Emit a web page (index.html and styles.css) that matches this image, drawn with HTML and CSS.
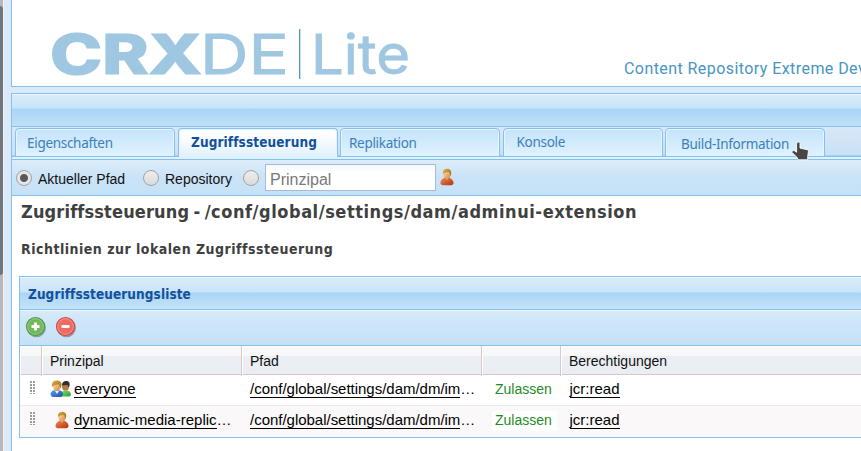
FILE: index.html
```html
<!DOCTYPE html>
<html lang="de">
<head>
<meta charset="utf-8">
<title>CRXDE Lite</title>
<link rel="stylesheet" href="styles.css">
</head>
<body>
<svg width="0" height="0" class="defs" aria-hidden="true">
  <defs>
    <linearGradient id="hair" x1="0" y1="0" x2="1" y2="1"><stop offset="0" stop-color="#e0b245"/><stop offset="1" stop-color="#96641b"/></linearGradient>
    <linearGradient id="skin" x1="0" y1="0" x2="1" y2="1"><stop offset="0" stop-color="#ffe2ae"/><stop offset="1" stop-color="#d98a3d"/></linearGradient>
    <linearGradient id="red" x1="0" y1="0" x2="1" y2="1"><stop offset="0" stop-color="#f58a50"/><stop offset="1" stop-color="#ae3210"/></linearGradient>
    <linearGradient id="blue" x1="0" y1="0" x2="1" y2="1"><stop offset="0" stop-color="#5d9ef0"/><stop offset="1" stop-color="#1d4fa6"/></linearGradient>
    <linearGradient id="green" x1="0" y1="0" x2="1" y2="1"><stop offset="0" stop-color="#82e072"/><stop offset="1" stop-color="#259b31"/></linearGradient>
    <symbol id="user" viewBox="0 0 14 18">
      <path d="M.5 14.800C.6 12.200 2.400 10.900 5 9.500h4c2.600 1.400 4.400 2.600 4.500 5.100.1 1.600-.6 2.300-2 2.600H2.500C1.100 16.900.4 16.200.5 14.800Z" fill="url(#red)"/>
      <path d="M4.600 8.500 7 12.300l2.500-3.800Z" fill="#e9aa62"/>
      <ellipse cx="7" cy="6" rx="3.500" ry="4.500" fill="url(#skin)"/>
      <path d="M3.100 6.500C2.500 3 3.700.8 7 .7c3.500 0 4.800 2.400 4 5.800l-.8 1.700c.1-2.500-.5-3.600-2-4.200-1.700.7-3.400.4-4.300 1Z" fill="url(#hair)"/>
    </symbol>
  </defs>
</svg>
<div class="app">
  <div class="rail"><div class="thumb"></div></div>
  <div class="main">
    <header class="banner">
      <svg class="logo" width="365" height="84" viewBox="48 2 365 84" role="img">
        <text class="logo-bold" x="50" y="74" textLength="152" lengthAdjust="spacingAndGlyphs">CRX</text>
        <text class="logo-thin" x="200" y="74" textLength="89" lengthAdjust="spacingAndGlyphs">DE</text>
        <rect x="299" y="29" width="1.300" height="50" fill="#4a93c4"/>
        <text class="logo-thin" x="311" y="74" textLength="99" lengthAdjust="spacingAndGlyphs">Lite</text>
      </svg>
      <span class="tagline">Content Repository Extreme Development Environment</span>
    </header>
    <section class="panel">
      <div class="bar"></div>
      <nav class="tabs">
        <a class="tab t1">Eigenschaften</a>
        <a class="tab active t2">Zugriffssteuerung</a>
        <a class="tab t3">Replikation</a>
        <a class="tab t4">Konsole</a>
        <a class="tab t5">Build-Information
          <svg class="cursor" width="22" height="22" viewBox="0 0 22 22"><path d="M7.600 2.200c1.300-.6 2.400.1 2.400 1.500v4.400l7.200 1.600c1 .3 1.300.9 1.200 1.900l-.7 5.400v2.800H8.200l-1.300-2.500-5.100-5.100c.3-1.800 1.700-2.100 2.900-1.300l1.900 1.400V4.200c0-.9.300-1.500 1-2Z" fill="#464646" stroke="#fff" stroke-width=".9"/></svg>
        </a>
      </nav>
      <div class="filters">
        <i class="radio on"></i><span class="r1">Aktueller Pfad</span>
        <i class="radio"></i><span class="r2">Repository</span>
        <i class="radio"></i><span class="field">Prinzipal</span>
        <svg class="pick" width="14" height="18"><use href="#user"/></svg>
      </div>
      <main class="content">
        <h1>Zugriffssteuerung - <span>/conf/global/settings/dam/adminui-extension</span></h1>
        <h2>Richtlinien zur lokalen Zugriffssteuerung</h2>
        <div class="list">
          <div class="list-title"><span>Zugriffssteuerungsliste</span></div>
          <div class="tools">
            <svg width="22" height="22" viewBox="0 0 22 22"><circle cx="11.500" cy="11.700" r="9.500" fill="#617868" opacity=".6"/><circle cx="10.500" cy="10.500" r="9.600" fill="#4b9b43"/><circle cx="10.500" cy="10.500" r="7.900" fill="#72b85e" stroke="#a9d79b" stroke-width=".8"/><path d="M10.500 6.500v8M6.500 10.500h8" stroke="#fff" stroke-width="2.800"/></svg>
            <svg width="22" height="22" viewBox="0 0 22 22"><circle cx="11.500" cy="11.700" r="9.500" fill="#786166" opacity=".6"/><circle cx="10.500" cy="10.500" r="9.600" fill="#d44745"/><circle cx="10.500" cy="10.500" r="7.900" fill="#ee6b61" stroke="#f7aaa2" stroke-width=".8"/><path d="M6.500 10.500h8" stroke="#fff" stroke-width="2.800"/></svg>
          </div>
          <div class="row head"><span></span><span><b>Prinzipal</b></span><span><b>Pfad</b></span><span></span><span><b>Berechtigungen</b></span></div>
          <div class="row">
            <span><i class="grip"></i></span>
            <span class="who"><svg width="22" height="18" viewBox="0 0 22 18"><path d="M11 15c0-3 1.500-4.500 4.800-4.500S21 12 21 15l-1.500 1.500H12Z" fill="url(#green)"/><ellipse cx="15.500" cy="6.500" rx="3.500" ry="4.200" fill="#b67d42"/><path d="M12 5.500C12 2.500 13.500 1 16 1c3 0 4.200 2 3.500 5l-1 1.500-.9-2.500Z" fill="#30302c"/><path d="M.500 14.500C.500 11.700 2 10.500 5 10.300h4c2.700.3 4 1.500 4 4.200L11.500 17H2Z" fill="url(#blue)"/><path d="m5 11 2 3 2-3Z" fill="#e9f3ff"/><ellipse cx="6.800" cy="6.200" rx="3.700" ry="4.500" fill="url(#skin)"/><path d="M2 7C1.300 2.600 3.500.6 6.800.6c4 0 5.500 2.600 4.300 6.400L10 8.500C10.200 6 9.500 5 8 4.300 6.300 5.200 4.500 5 3.500 5.800Z" fill="url(#hair)"/></svg><u>everyone</u></span>
            <span class="path"><u>/conf/global/settings/dam/dm/im</u>…</span>
            <span class="allow">Zulassen</span>
            <span class="perm"><u>jcr:read</u></span>
          </div>
          <div class="row alt">
            <span><i class="grip"></i></span>
            <span class="who"><svg class="single" width="14" height="18"><use href="#user"/></svg><u>dynamic-media-replic</u>…</span>
            <span class="path"><u>/conf/global/settings/dam/dm/im</u>…</span>
            <span class="allow"><em>Zulassen</em></span>
            <span class="perm"><u>jcr:read</u></span>
          </div>
        </div>
      </main>
    </section>
  </div>
</div>
</body>
</html>
```
FILE: styles.css
```css
* { box-sizing: border-box; }
body { margin: 0; background: #dce9f8; font-family: "Liberation Sans", sans-serif; color: #111; overflow: hidden; }
.defs { position: absolute; }
.app { display: flex; width: 861px; height: 451px; overflow: hidden; }
.rail { width: 3px; flex: none; background: #b8b8b8; padding-top: 6px; }
.thumb { height: 269px; background: #73757d; border-radius: 0 3px 3px 0; }
.main { flex: none; width: 858px; padding-left: 7px; border-left: 1px solid #edf3fb; }
.banner { display: flex; width: 860px; height: 87px; background: #fff; border-left: 1px solid #84c1ec; border-bottom: 1px solid #84c1ec; overflow: hidden; }
.logo { margin: 2px 0 0 36px; flex: none; }
.logo text { fill: #9fc7e1; stroke: #9fc7e1; font-family: Inter, sans-serif; font-size: 55px; }
.logo .logo-bold { font-weight: 800; stroke-width: 1.2px; }
.logo .logo-thin { font-weight: 400; stroke-width: .8px; }
.tagline { margin: 59px 0 0 211px; flex: none; white-space: nowrap; font: 16px/20px Roboto, sans-serif; color: #4795c4; letter-spacing: .43px; }
.panel { width: 860px; height: 358px; margin-top: 6px; background: #fff; border: 1px solid #84c1ec; border-width: 1px 0 0 1px; }
.bar { height: 33px; border-top: 1px solid #eef7fe; border-bottom: 1px solid #84c1ec; background: linear-gradient(#d9ecf8 0, #c9e4f9 13px, #a9d5f5 14px, #c0e0f8 100%); }
.tabs { display: flex; align-items: flex-end; height: 33px; padding: 1px 0 2px 3px; gap: 2.5px; border-bottom: 1px solid #84c1ec; background: linear-gradient(#d9e8f7, #c9e0f5 28px, #84c1ec 29px, #84c1ec 30px, #dff1fe 30px); font: 13.5px/28px "Noto Sans", sans-serif; letter-spacing: -.3px; color: #3b80b8; }
.tab { position: relative; flex: none; width: 160px; height: 29px; padding-left: 11px; border: 1px solid #84c1ec; border-radius: 4px 4px 0 0; background: linear-gradient(#c5e3fa, #dff2ff); box-shadow: inset 1px 1px #e5f4ff, inset -1px 0 #e5f4ff; white-space: nowrap; }
.tab.active { height: 29px; border-bottom: 0; padding-left: 12.5px; background: linear-gradient(#fff, #f9fcff 35%, #e0f1fd); font: 700 13.5px/26px "DejaVu Sans Condensed", sans-serif; letter-spacing: .1px; color: #13519a; }
.t4 { line-height: 27px; padding-left: 13px; }
.t3 { padding-left: 8px; }
.t5 { line-height: 30px; padding-left: 15px; }
.cursor { position: absolute; left: 124px; top: 11px; }
.filters { display: flex; align-items: center; height: 36px; padding-left: 4px; border-bottom: 1px solid #84c1ec; background: linear-gradient(#dcedf9, #cae3f8 50%, #c5e2f5); font-size: 14px; }
.r1, .r2 { padding-top: 3px; }
.radio { flex: none; width: 16px; height: 16px; border: 1px solid #a3a3a3; border-radius: 50%; background: linear-gradient(#eee, #dadada); }
.radio.on { background: radial-gradient(circle, #5a5a5a 0 3.500px, #e6e6e6 4.500px); }
.r1 { width: 111px; flex: none; padding-left: 6px; }
.r2 { width: 84px; flex: none; padding-left: 6px; }
.field { margin-left: 6px; width: 171px; height: 27px; border: 1px solid #adb7dc; background: linear-gradient(#f3f9f9, #fff 8px); color: #797979; font-size: 16px; line-height: 29px; padding-left: 4px; }
.pick { margin: -2px 0 0 4px; }
.content { padding: 4px 0 0 7px; }
h1, h2 { margin: 0; font-family: "DejaVu Sans Condensed", sans-serif; font-weight: 700; color: #404040; white-space: nowrap; }
h1 { padding-left: 2px; font-size: 18px; line-height: 24px; letter-spacing: .15px; word-spacing: -1.5px; }
h1 span { letter-spacing: .55px; }
h2 { padding: 15px 0 17px 2px; font-size: 14px; line-height: 20px; letter-spacing: .49px; }
.list { width: 860px; height: 162px; border: 1px solid #84c1ec; }
.list-title { height: 33px; padding-left: 8px; border-top: 1px solid #eef7fe; border-bottom: 1px solid #84c1ec; background: linear-gradient(#d9ecf8 0, #c9e4f9 14px, #a9d5f5 15px, #c5e3f8 100%); font: 700 13.5px/32px "DejaVu Sans Condensed", sans-serif; letter-spacing: .08px; color: #15519a; }
.tools { display: flex; height: 36px; gap: 8px; padding: 5px 5px; border-top: 1px solid #eef7fe; border-bottom: 1px solid #84c1ec; background: linear-gradient(#d7eaf7, #cce5fa 40%, #c6e1f4); }
.row { display: grid; grid-template-columns: 22px 200px 240px 79px 1fr; height: 31px; border-bottom: 1px solid #ebe8ea; font-size: 15px; white-space: nowrap; }
.row.alt { background: #faf8f9; border-bottom: 0; }
.row > span { display: flex; }
.row.head { height: 29px; font-size: 14px; line-height: 30px; border-bottom: 1px solid #d8c8ca; background: linear-gradient(#fcfafb, #f6f7f9 35%, #ebeff3 36%, #eaeef3); }
.head > span { border-right: 1px solid #d8c8ca; box-shadow: inset 1px 0 #fff; padding-left: 8px; }
.head b { font-weight: 400; }
.row:not(.head) { color: #000; line-height: 28px; }
.grip { margin: 6px 0 0 10px; width: 5px; height: 13px; background: radial-gradient(circle at 1px 1px, #999 0 .7px, transparent 1px) 0 0 / 3px 3px; }
.who svg { margin: 5px 2px 0 8px; flex: none; }
.who .single { margin: 5px 5px 0 13px; }
.row u { text-decoration: none; height: 23px; border-bottom: 1px solid #000; }
.path { padding-left: 8px; letter-spacing: -.02px; }
.row .allow { color: #1f8b1f; padding-left: 10px; font-size: 14px; line-height: 29px; text-indent: 3px; }
.allow em { font-style: normal; height: 20px; line-height: 19px; margin-top: 5px; padding-right: 5px; background: #fff; }
.perm { padding-left: 8.5px; }
```
